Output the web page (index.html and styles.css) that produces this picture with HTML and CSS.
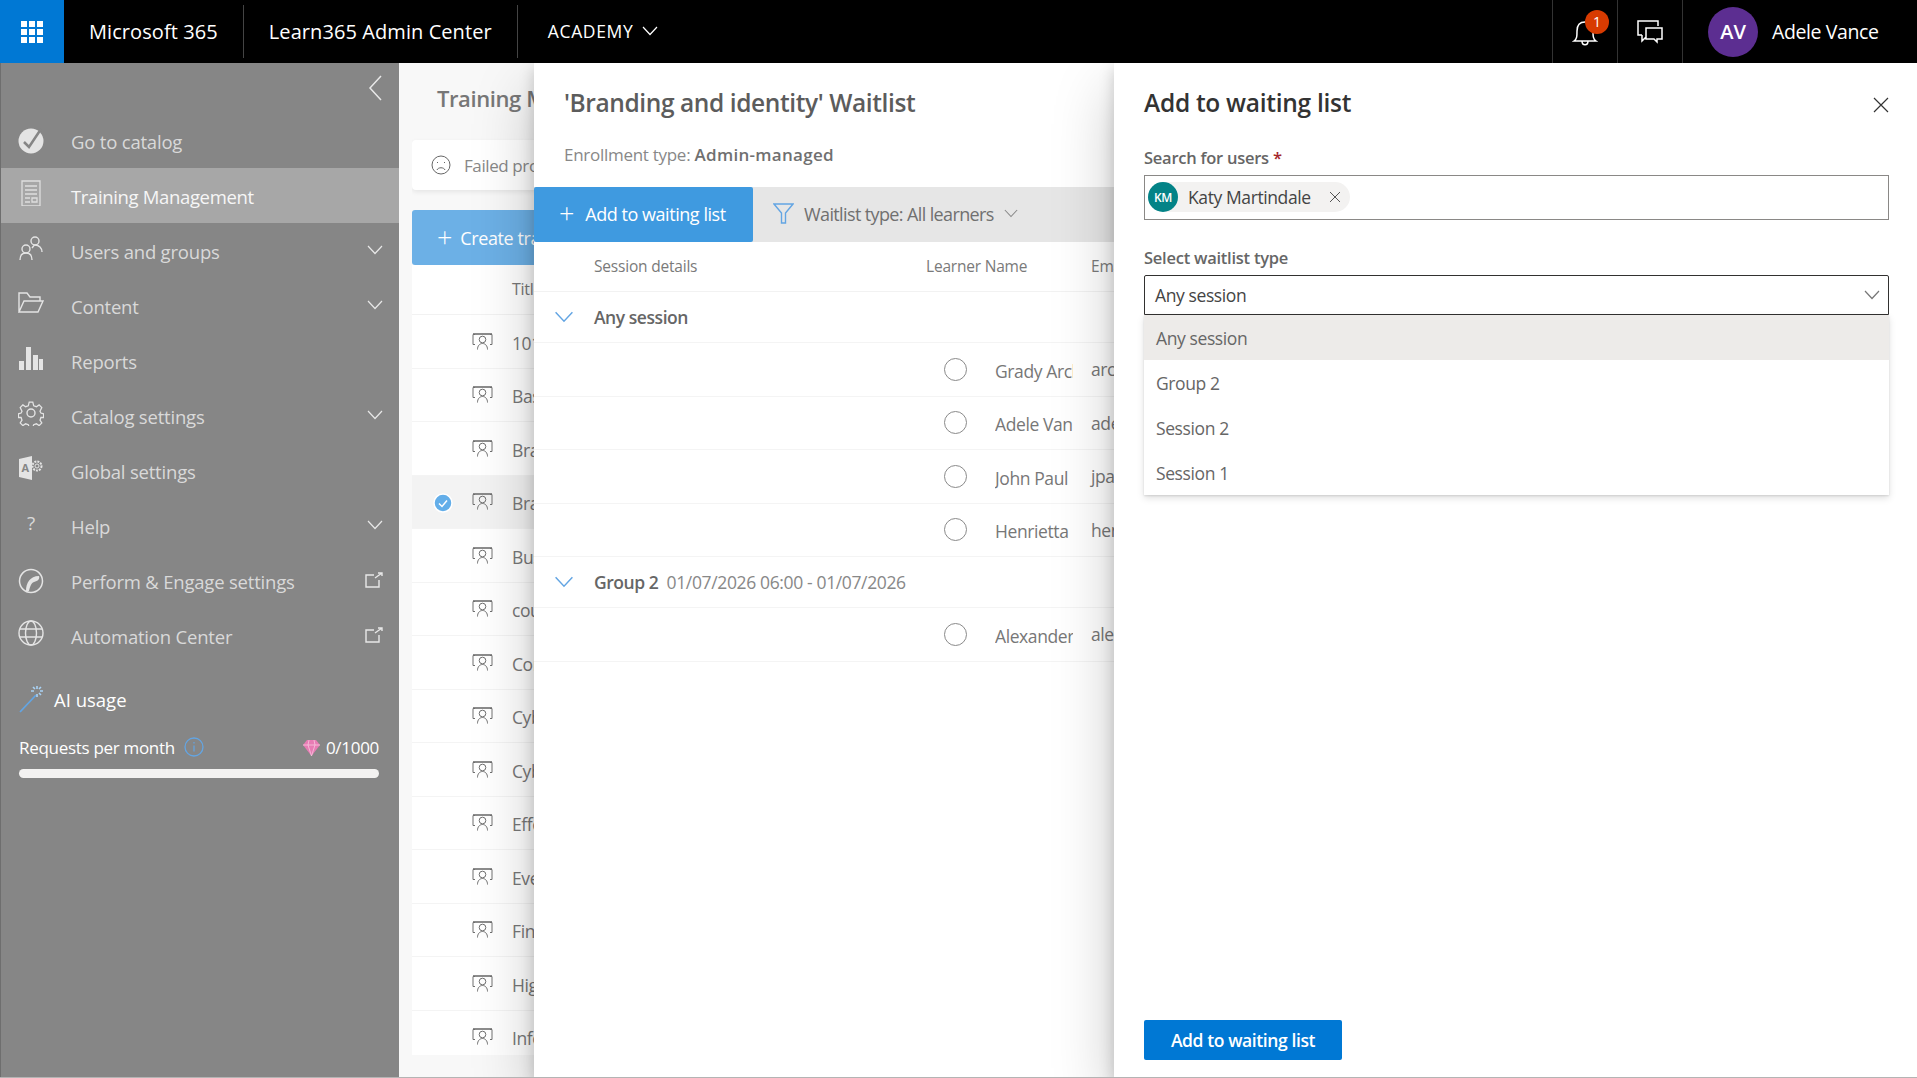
FILE: index.html
```html
<!DOCTYPE html>
<html lang="en">
<head>
    <meta charset="UTF-8">
    <title>Learn365 Admin Center</title>
    <link rel="stylesheet" href="styles.css">
</head>
<body>
    <svg class="sprite" width="0" height="0">
        <symbol id="i-chev" viewBox="0 0 16 10"><path d="M1 1l7 7.5L15 1" fill="none" stroke="currentColor" stroke-width="1.2"/></symbol>
        <symbol id="i-out" viewBox="0 0 18 16"><path d="M9 3H1v12h13V8M10 6l7-5M13 1h4v3" fill="none" stroke="currentColor" stroke-width="1.4"/></symbol>
        <symbol id="i-course" viewBox="0 0 21 17"><path d="M3 1.500H1v10h2M18 1.500h2v10h-2" fill="none" stroke="currentColor"/><path d="M1 1h19" stroke="currentColor" stroke-width="1.600"/><circle cx="10.500" cy="6.500" r="3.300" fill="none" stroke="currentColor"/><path d="M5.500 16.500c0-3.500 2-6 5-6s5 2.500 5 6" fill="none" stroke="currentColor"/></symbol>
    </svg>

    <header class="topbar">
        <div class="waffle">
            <svg width="22" height="22" viewBox="0 0 22 22" fill="#fff"><path d="M0 0h6v6H0zM8 0h6v6H8zM16 0h6v6h-6zM0 8h6v6H0zM8 8h6v6H8zM16 8h6v6h-6zM0 16h6v6H0zM8 16h6v6H8zM16 16h6v6h-6z"/></svg>
        </div>
        <div class="brand">Microsoft 365</div>
        <div class="brand">Learn365 Admin Center</div>
        <div class="academy">ACADEMY <svg width="16" height="10"><use href="#i-chev"/></svg></div>
        <div class="top-right">
            <div class="top-btn">
                <svg width="26" height="30" viewBox="0 0 26 30" fill="none" stroke="#fff" stroke-width="1.500"><path d="M2 24c3-2 3-5 3-10 0-6 3-9 8-9s8 3 8 9c0 5 0 8 3 10zM10 24c0 5 6 5 6 0"/></svg>
                <span class="badge">1</span>
            </div>
            <div class="top-btn">
                <svg width="26" height="24" viewBox="0 0 26 24" fill="none" stroke="#fff" stroke-width="1.500"><path d="M5 15H1V1h20v5M9 8h16v11h-5v3l-3-3H9zM5 15v6l4-4"/></svg>
            </div>
            <div class="user">
                <span class="user-avatar">AV</span>
                <span>Adele Vance</span>
            </div>
        </div>
    </header>

    <div class="app">
        <aside class="sidebar">
            <div class="collapse">
                <svg width="14" height="26" viewBox="0 0 14 26"><path d="M13 1L2 13l11 12" fill="none" stroke="#e8e8e8" stroke-width="1.500"/></svg>
            </div>
            <ul class="nav">
                <li class="nav-item">
                    <svg class="nav-icon flat" viewBox="0 0 26 26"><circle cx="13" cy="13" r="12.500" fill="#e4e4e4"/><path d="M6 14l5 5L23 1" fill="none" stroke="#868686" stroke-width="2.500"/></svg>
                    <span>Go to catalog</span>
                </li>
                <li class="nav-item active">
                    <svg class="nav-icon" viewBox="0 0 26 26" fill="none" stroke="#dedede" stroke-width="1.300"><path d="M4 1h18v25H4zM7 6h12M7 10h12M7 14h12M7 18h5M7 22h5M14 18h5v4h-5z"/></svg>
                    <span>Training Management</span>
                </li>
                <li class="nav-item">
                    <svg class="nav-icon" viewBox="0 0 26 26" fill="none" stroke="#e4e4e4" stroke-width="1.400"><circle cx="17" cy="6" r="4"/><circle cx="8" cy="14" r="4"/><path d="M2 25c0-4 2-7 6-7s6 3 6 7M14 13c1-1 2-3 3-3 4 0 7 3 7 7"/></svg>
                    <span>Users and groups</span>
                    <svg class="nav-end" width="16" height="10"><use href="#i-chev"/></svg>
                </li>
                <li class="nav-item">
                    <svg class="nav-icon" viewBox="0 0 26 26" fill="none" stroke="#e4e4e4" stroke-width="1.400"><path d="M1 22V3h8l3 4h10v4M1 22h19l5-11H6z"/></svg>
                    <span>Content</span>
                    <svg class="nav-end" width="16" height="10"><use href="#i-chev"/></svg>
                </li>
                <li class="nav-item">
                    <svg class="nav-icon" viewBox="0 0 26 26" fill="#e4e4e4"><path d="M1 16h5v9H1zM8 2h5v23H8zM15 10h5v15h-5zM21 14h4v11h-4z"/></svg>
                    <span>Reports</span>
                </li>
                <li class="nav-item">
                    <svg class="nav-icon" viewBox="0 0 26 26" fill="none" stroke="#e4e4e4" stroke-width="1.400"><circle cx="13" cy="13" r="4"/><path d="M11 1h4l1 4 3 1 3-2 3 3-2 4 1 2 3 1v4l-3 0-1 3 2 3-3 3-3-2-3 1-1 3h-4l-1-3-3-1-3 2-3-3 2-3-1-3-3 0v-4l3-1 1-2-2-4 3-3 3 2 3-1z" transform="translate(1.300 1.300) scale(.9)"/></svg>
                    <span>Catalog settings</span>
                    <svg class="nav-end" width="16" height="10"><use href="#i-chev"/></svg>
                </li>
                <li class="nav-item">
                    <svg class="nav-icon" viewBox="0 0 26 26"><path d="M1 4l13-3v24L1 22z" fill="#e4e4e4"/><text x="3.500" y="17" class="nav-a">A</text><circle cx="19" cy="11" r="4.500" fill="none" stroke="#e4e4e4" stroke-width="2" stroke-dasharray="2 1"/><circle cx="19" cy="11" r="2" fill="none" stroke="#e4e4e4"/></svg>
                    <span>Global settings</span>
                </li>
                <li class="nav-item">
                    <span class="nav-icon nav-help">?</span>
                    <span>Help</span>
                    <svg class="nav-end" width="16" height="10"><use href="#i-chev"/></svg>
                </li>
                <li class="nav-item">
                    <svg class="nav-icon flat" viewBox="0 0 26 26"><circle cx="13" cy="13" r="11.500" fill="none" stroke="#e4e4e4" stroke-width="1.500"/><path d="M8 23c0-8 4-15 13-15 1 3-1 5-5 6-3 1-4 5-5 9z" fill="#e4e4e4"/></svg>
                    <span>Perform &amp; Engage settings</span>
                    <svg class="nav-end" width="18" height="16"><use href="#i-out"/></svg>
                </li>
                <li class="nav-item">
                    <svg class="nav-icon" viewBox="0 0 26 26" fill="none" stroke="#e4e4e4" stroke-width="1.400"><circle cx="13" cy="13" r="12"/><ellipse cx="13" cy="13" rx="5.500" ry="12"/><path d="M2 9h22M2 17h22"/></svg>
                    <span>Automation Center</span>
                    <svg class="nav-end" width="18" height="16"><use href="#i-out"/></svg>
                </li>
            </ul>

            <div class="ai-title">
                <svg width="26" height="28" viewBox="0 0 26 28" fill="none"><path d="M1 27L17 10" stroke="#63a5e3" stroke-width="1.800"/><path d="M18 1v3M18 9v3M12 6h3M21 6h3M14 2l2 2M22 2l-2 2M22 10l-2-2" stroke="#a9d2f5" stroke-width="1.600"/></svg>
                <span>AI usage</span>
            </div>
            <div class="ai-row">
                <span>Requests per month</span>
                <svg class="ai-info" width="20" height="20" viewBox="0 0 20 20"><circle cx="10" cy="10" r="9" fill="none" stroke="#63a5e3" stroke-width="1.300"/><path d="M10 8.500v6M10 5v1.500" stroke="#63a5e3" stroke-width="1.200"/></svg>
                <svg class="ai-gem" width="17" height="17" viewBox="0 0 17 17"><path d="M4 1h9l4 5-8.500 11L0 6z" fill="#e77cb4"/><path d="M0 6h17M6 1L5 6l3.500 11L12 6l-1-5" fill="none" stroke="#f7c6de" stroke-width=".8"/></svg>
                <span>0/1000</span>
            </div>
            <div class="ai-bar"></div>
        </aside>

        <main class="main">
            <div class="behind">
                <h1 class="main-title">Training Management</h1>
                <div class="failed-card">
                    <svg width="20" height="20" viewBox="0 0 20 20" fill="none" stroke="#666"><circle cx="10" cy="10" r="9"/><path d="M6 15c1-3 7-3 8 0M6.500 7v1M13.500 7v1"/></svg>
                    <span>Failed processes</span>
                </div>
                <button class="create-btn"><span class="plus">+</span> Create training</button>
                <div class="table">
                    <div class="table-head">Title</div>
                    <div class="t-row"><svg class="t-icon"><use href="#i-course"/></svg><span>101 Course</span></div>
                    <div class="t-row"><svg class="t-icon"><use href="#i-course"/></svg><span>Basics</span></div>
                    <div class="t-row"><svg class="t-icon"><use href="#i-course"/></svg><span>Brand</span></div>
                    <div class="t-row selected">
                        <svg class="t-check" width="20" height="20" viewBox="0 0 20 20"><circle cx="10" cy="10" r="9" fill="#63aee9" stroke="#fff" stroke-width="1.500"/><path d="M6 10.500l3 3 5-6" fill="none" stroke="#fff" stroke-width="1.500"/></svg>
                        <svg class="t-icon"><use href="#i-course"/></svg><span>Branding</span>
                    </div>
                    <div class="t-row"><svg class="t-icon"><use href="#i-course"/></svg><span>Business</span></div>
                    <div class="t-row"><svg class="t-icon"><use href="#i-course"/></svg><span>course</span></div>
                    <div class="t-row"><svg class="t-icon"><use href="#i-course"/></svg><span>Compliance</span></div>
                    <div class="t-row"><svg class="t-icon"><use href="#i-course"/></svg><span>Cyber</span></div>
                    <div class="t-row"><svg class="t-icon"><use href="#i-course"/></svg><span>Cyber</span></div>
                    <div class="t-row"><svg class="t-icon"><use href="#i-course"/></svg><span>Effective</span></div>
                    <div class="t-row"><svg class="t-icon"><use href="#i-course"/></svg><span>Everyday</span></div>
                    <div class="t-row"><svg class="t-icon"><use href="#i-course"/></svg><span>Finance</span></div>
                    <div class="t-row"><svg class="t-icon"><use href="#i-course"/></svg><span>High</span></div>
                    <div class="t-row"><svg class="t-icon"><use href="#i-course"/></svg><span>Info</span></div>
                </div>
            </div>

            <section class="panel waitlist">
                <h2 class="panel-title muted">'Branding and identity' Waitlist</h2>
                <p class="enroll">Enrollment type: <b>Admin-managed</b></p>
                <div class="toolbar">
                    <button class="add-btn"><span class="plus">+</span> Add to waiting list</button>
                    <div class="filter">
                        <svg width="21" height="21" viewBox="0 0 21 21" fill="none" stroke="#63a5e3" stroke-width="1.400"><path d="M1 1h19l-7.500 9v10h-4V10z"/></svg>
                        <span>Waitlist type: All learners</span>
                        <svg class="filter-chev" width="14" height="9"><use href="#i-chev"/></svg>
                    </div>
                </div>
                <div class="w-head">
                    <span class="w-session">Session details</span>
                    <span class="w-learner">Learner Name</span>
                    <span>Email</span>
                </div>
                <div class="w-group"><svg width="20" height="12" viewBox="0 0 16 10"><use href="#i-chev"/></svg><b>Any session</b></div>
                <div class="w-row"><span class="radio"></span><span class="w-name">Grady Archie</span><span>archie@</span></div>
                <div class="w-row"><span class="radio"></span><span class="w-name">Adele Vance</span><span>adele@</span></div>
                <div class="w-row"><span class="radio"></span><span class="w-name">John Paul</span><span>jpaul@</span></div>
                <div class="w-row"><span class="radio"></span><span class="w-name">Henrietta</span><span>henrietta@</span></div>
                <div class="w-group"><svg width="20" height="12" viewBox="0 0 16 10"><use href="#i-chev"/></svg><b>Group 2</b> 01/07/2026 06:00 - 01/07/2026</div>
                <div class="w-row"><span class="radio"></span><span class="w-name">Alexander</span><span>alex@</span></div>
            </section>

            <section class="panel adder">
                <h2 class="panel-title">Add to waiting list</h2>
                <svg class="close" width="16" height="16" viewBox="0 0 16 16"><path d="M1 1l14 14M15 1L1 15" stroke="#333" stroke-width="1.200"/></svg>
                <label class="field-label">Search for users<span class="req"> *</span></label>
                <div class="people-input">
                    <div class="chip">
                        <span class="chip-avatar">KM</span>
                        <span class="chip-name">Katy Martindale</span>
                        <svg width="12" height="12" viewBox="0 0 12 12"><path d="M1 1l10 10M11 1L1 11" stroke="#555"/></svg>
                    </div>
                </div>
                <label class="field-label">Select waitlist type</label>
                <div class="select">
                    <span>Any session</span>
                    <svg width="16" height="10"><use href="#i-chev"/></svg>
                </div>
                <ul class="options">
                    <li class="option current">Any session</li>
                    <li class="option">Group 2</li>
                    <li class="option">Session 2</li>
                    <li class="option">Session 1</li>
                </ul>
                <button class="submit">Add to waiting list</button>
            </section>
        </main>
    </div>
</body>
</html>
```

FILE: styles.css
```css
* {
    margin: 0;
    padding: 0;
    box-sizing: border-box;
}
html, body {
    height: 100%;
    overflow: hidden;
}
body {
    font-family: "Open Sans", "Noto Sans", sans-serif;
    color: #333;
    background: #f8f8f8;
    display: flex;
    flex-direction: column;
    border-bottom: 1px solid #b4b4b4;
}
ul {
    list-style: none;
}
button {
    font-family: inherit;
    border: 0;
}
.sprite {
    position: absolute;
}

/* top bar */
.topbar {
    height: 63px;
    flex: none;
    background: #000;
    color: #fff;
    display: flex;
    align-items: center;
}
.waffle {
    width: 64px;
    height: 63px;
    background: #0078d4;
    display: flex;
    align-items: center;
    justify-content: center;
}
.brand {
    height: 53px;
    display: flex;
    align-items: center;
    padding: 0 25px;
    font-size: 20px;
    letter-spacing: 0.08px;
    border-right: 1px solid #444;
}
.academy {
    margin-left: 30px;
    font-size: 17.500px;
    letter-spacing: 0.65px;
    display: flex;
    align-items: center;
    gap: 9px;
    margin-top: -2px;
}
.top-right {
    margin-left: auto;
    display: flex;
    align-items: center;
    height: 63px;
}
.top-btn {
    width: 65px;
    height: 63px;
    border-left: 1px solid #333;
    position: relative;
    display: flex;
    align-items: center;
    justify-content: center;
}
.badge {
    position: absolute;
    left: 32px;
    top: 10px;
    width: 24px;
    height: 24px;
    border-radius: 50%;
    background: #d83b01;
    font-size: 14px;
    text-align: center;
    line-height: 23px;
}
.user {
    border-left: 1px solid #333;
    height: 63px;
    width: 235px;
    display: flex;
    align-items: center;
    padding-left: 25px;
    gap: 14px;
    font-size: 19.500px;
    letter-spacing: -0.4px;
}
.user-avatar {
    width: 50px;
    height: 50px;
    border-radius: 50%;
    background: #5c2e91;
    font-weight: 600;
    font-size: 20px;
    letter-spacing: 0;
    display: flex;
    align-items: center;
    justify-content: center;
}

/* sidebar */
.app {
    flex: 1;
    display: flex;
    min-height: 0;
}
.sidebar {
    width: 399px;
    flex: none;
    background: #868686;
    border-left: 1px solid #6e6e6e;
    color: #d9d9d9;
}
.collapse {
    height: 50px;
    padding: 12px 17px 0 0;
    display: flex;
    justify-content: flex-end;
}
.nav-item {
    height: 55px;
    display: flex;
    align-items: center;
    padding: 0 16px 0 17px;
    font-size: 18.500px;
    letter-spacing: -0.2px;
}
.nav-item > span:not(.nav-icon) {
    margin-top: 2px;
}
.nav-item.active {
    background: #a7a7a7;
    color: #f6f6f6;
    letter-spacing: -0.35px;
}
.nav-icon {
    width: 26px;
    height: 26px;
    margin-right: 27px;
    margin-top: -6px;
    flex: none;
}
.nav-icon.flat {
    margin-top: 0;
}
.nav-a {
    font-size: 11px;
    font-weight: 700;
    fill: #868686;
}
.nav-help {
    text-align: center;
    font-size: 19px;
    line-height: 26px;
}
.nav-end {
    margin-left: auto;
    margin-top: -2px;
    color: #e8e8e8;
}
.ai-title {
    margin-top: 19px;
    padding-left: 18px;
    height: 34px;
    display: flex;
    align-items: center;
    gap: 9px;
    font-size: 18.500px;
    font-weight: 500;
    letter-spacing: 0;
    color: #fff;
}
.ai-row {
    margin: 19px 20px 0 18px;
    height: 24px;
    display: flex;
    align-items: center;
    font-size: 17px;
    letter-spacing: -0.3px;
    color: #fff;
}
.ai-info {
    margin-left: 9px;
}
.ai-gem {
    margin-left: auto;
    margin-right: 6px;
}
.ai-bar {
    margin: 10px 20px 0 18px;
    height: 9px;
    border-radius: 5px;
    background: #f3f2f1;
}

/* page behind the panels */
.main {
    flex: 1;
    position: relative;
    overflow: hidden;
    padding: 0 0 0 13px;
    color: #666;
}
.behind {
    width: 122px;
    height: 100%;
    overflow: hidden;
}
.main-title {
    font-size: 22px;
    font-weight: 600;
    letter-spacing: -0.4px;
    color: #777;
    padding: 20px 0 0 25px;
    height: 77px;
    white-space: nowrap;
}
.failed-card {
    width: 300px;
    height: 50px;
    background: #fff;
    border-radius: 4px;
    box-shadow: 0 2px 5px rgba(0,0,0,0.08);
    display: flex;
    align-items: center;
    gap: 13px;
    padding-left: 19px;
    font-size: 17px;
    letter-spacing: -0.4px;
    color: #888;
    white-space: nowrap;
}
.create-btn {
    display: block;
    width: 300px;
    height: 55px;
    margin-top: 20px;
    background: #6cb0e6;
    border-radius: 3px;
    color: #fff;
    font-size: 18px;
    letter-spacing: -0.4px;
    text-align: left;
    padding-left: 25px;
}
.plus {
    font-size: 27px;
    font-weight: 300;
    line-height: 20px;
    vertical-align: -2px;
    margin-right: 4px;
}
.table {
    width: 700px;
    height: 790px;
    background: #fff;
    overflow: hidden;
}
.table-head {
    height: 50px;
    border-bottom: 1px solid #f2f2f2;
    padding: 13px 0 0 100px;
    font-size: 16px;
    letter-spacing: -0.3px;
    color: #777;
}
.t-row {
    height: 53.500px;
    border-bottom: 1px solid #f4f4f4;
    display: flex;
    align-items: center;
    padding-left: 60px;
    font-size: 17.500px;
    letter-spacing: -0.4px;
    color: #777;
    position: relative;
}
.t-row span {
    margin-top: 3px;
}
.t-row.selected {
    background: #f3f3f3;
}
.t-icon {
    width: 21px;
    height: 17px;
    margin-right: 19px;
    color: #707070;
}
.t-check {
    position: absolute;
    left: 21px;
    top: 17px;
}

/* side panels */
.panel {
    position: absolute;
    top: 0;
    bottom: 0;
    background: #fff;
    box-shadow: 0 25.600px 57.600px rgba(0,0,0,0.22), 0 4.800px 14.400px rgba(0,0,0,0.18);
}
.panel-title {
    font-size: 24.500px;
    font-weight: 600;
    letter-spacing: -0.28px;
    color: #333;
    line-height: 34px;
    padding-top: 23px;
}
.panel-title.muted {
    color: #5c5c5c;
    letter-spacing: -0.4px;
    padding-left: 30px;
}
.waitlist {
    left: 135px;
    width: 600px;
}
.enroll {
    padding: 23px 0 0 30px;
    height: 67px;
    font-size: 17px;
    letter-spacing: -0.28px;
    color: #888;
}
.enroll b {
    font-weight: 600;
    letter-spacing: 0.3px;
    color: #707070;
}
.toolbar {
    height: 55px;
    background: #e6e6e6;
    display: flex;
}
.add-btn {
    width: 219px;
    background: #3f9ae0;
    color: #fff;
    border-radius: 2px;
    font-size: 18px;
    letter-spacing: -0.45px;
    text-align: left;
    padding: 0 0 2px 25px;
}
.add-btn .plus {
    margin-right: 7px;
}
.filter {
    display: flex;
    align-items: center;
    padding: 0 0 2px 20px;
    gap: 10px;
    font-size: 18px;
    letter-spacing: -0.62px;
    color: #707070;
}
.filter-chev {
    color: #888;
}
.w-head {
    height: 50px;
    border-bottom: 1px solid #f2f2f2;
    display: flex;
    align-items: center;
    font-size: 15.500px;
    letter-spacing: -0.2px;
    color: #7a7a7a;
    padding-bottom: 2px;
}
.w-session {
    margin-left: 60px;
    width: 332px;
}
.w-learner {
    width: 165px;
}
.w-group {
    height: 51px;
    border-bottom: 1px solid #f4f4f4;
    display: flex;
    align-items: center;
    padding-left: 20px;
    gap: 20px;
    font-size: 17.500px;
    letter-spacing: -0.36px;
    color: #888;
    white-space: pre;
}
.w-group svg {
    color: #63a5e3;
}
.w-group b {
    font-weight: 600;
    letter-spacing: -0.45px;
    color: #666;
    margin-right: -16px;
}
.w-row {
    height: 53.500px;
    border-bottom: 1px solid #f4f4f4;
    display: flex;
    align-items: center;
    padding-left: 410px;
    font-size: 17.500px;
    letter-spacing: -0.4px;
    color: #777;
}
.radio {
    width: 23px;
    height: 23px;
    border: 1.500px solid #8a8a8a;
    border-radius: 50%;
    margin-right: 28px;
    flex: none;
}
.w-name {
    width: 78px;
    margin-right: 18px;
    margin-top: 3px;
    overflow: hidden;
    white-space: nowrap;
    flex: none;
}
.adder {
    left: 715px;
    right: 0;
    padding: 0 28px 0 30px;
}
.close {
    position: absolute;
    right: 28px;
    top: 34px;
}
.field-label {
    display: block;
    margin-top: 26px;
    height: 24px;
    line-height: 24px;
    font-size: 16.500px;
    font-weight: 600;
    letter-spacing: -0.25px;
}
.req {
    color: #a4262c;
}
.people-input {
    height: 45px;
    margin-top: 5px;
    border: 1px solid #8a8886;
    padding: 6px 3px;
    display: flex;
}
.chip {
    height: 30px;
    width: 202px;
    border-radius: 15px;
    background: #f3f2f1;
    display: flex;
    align-items: center;
    font-size: 17.500px;
    letter-spacing: -0.4px;
    color: #444;
}
.chip-avatar {
    width: 30px;
    height: 30px;
    border-radius: 50%;
    background: #038387;
    color: #fff;
    font-size: 12px;
    font-weight: 600;
    letter-spacing: -0.3px;
    display: flex;
    align-items: center;
    justify-content: center;
    margin-right: 10px;
}
.chip-name {
    width: 141px;
    white-space: nowrap;
}
.select {
    height: 40px;
    margin-top: 5px;
    border: 1px solid #323130;
    border-radius: 2px 2px 0 0;
    display: flex;
    align-items: center;
    justify-content: space-between;
    padding: 0 8px 0 10px;
    font-size: 17.500px;
    letter-spacing: -0.4px;
    color: #444;
}
.select svg {
    color: #777;
}
.options {
    background: #fff;
    box-shadow: 0 3.200px 7.200px rgba(0,0,0,0.13), 0 0.600px 1.800px rgba(0,0,0,0.11);
}
.option {
    height: 45px;
    display: flex;
    align-items: center;
    padding-left: 12px;
    font-size: 17.500px;
    letter-spacing: -0.4px;
}
.option.current {
    background: #edebe9;
}
.submit {
    position: absolute;
    left: 30px;
    top: 957px;
    width: 198px;
    height: 40px;
    background: #0078d4;
    color: #fff;
    border-radius: 2px;
    font-size: 17.500px;
    font-weight: 600;
    letter-spacing: -0.4px;
}
```
